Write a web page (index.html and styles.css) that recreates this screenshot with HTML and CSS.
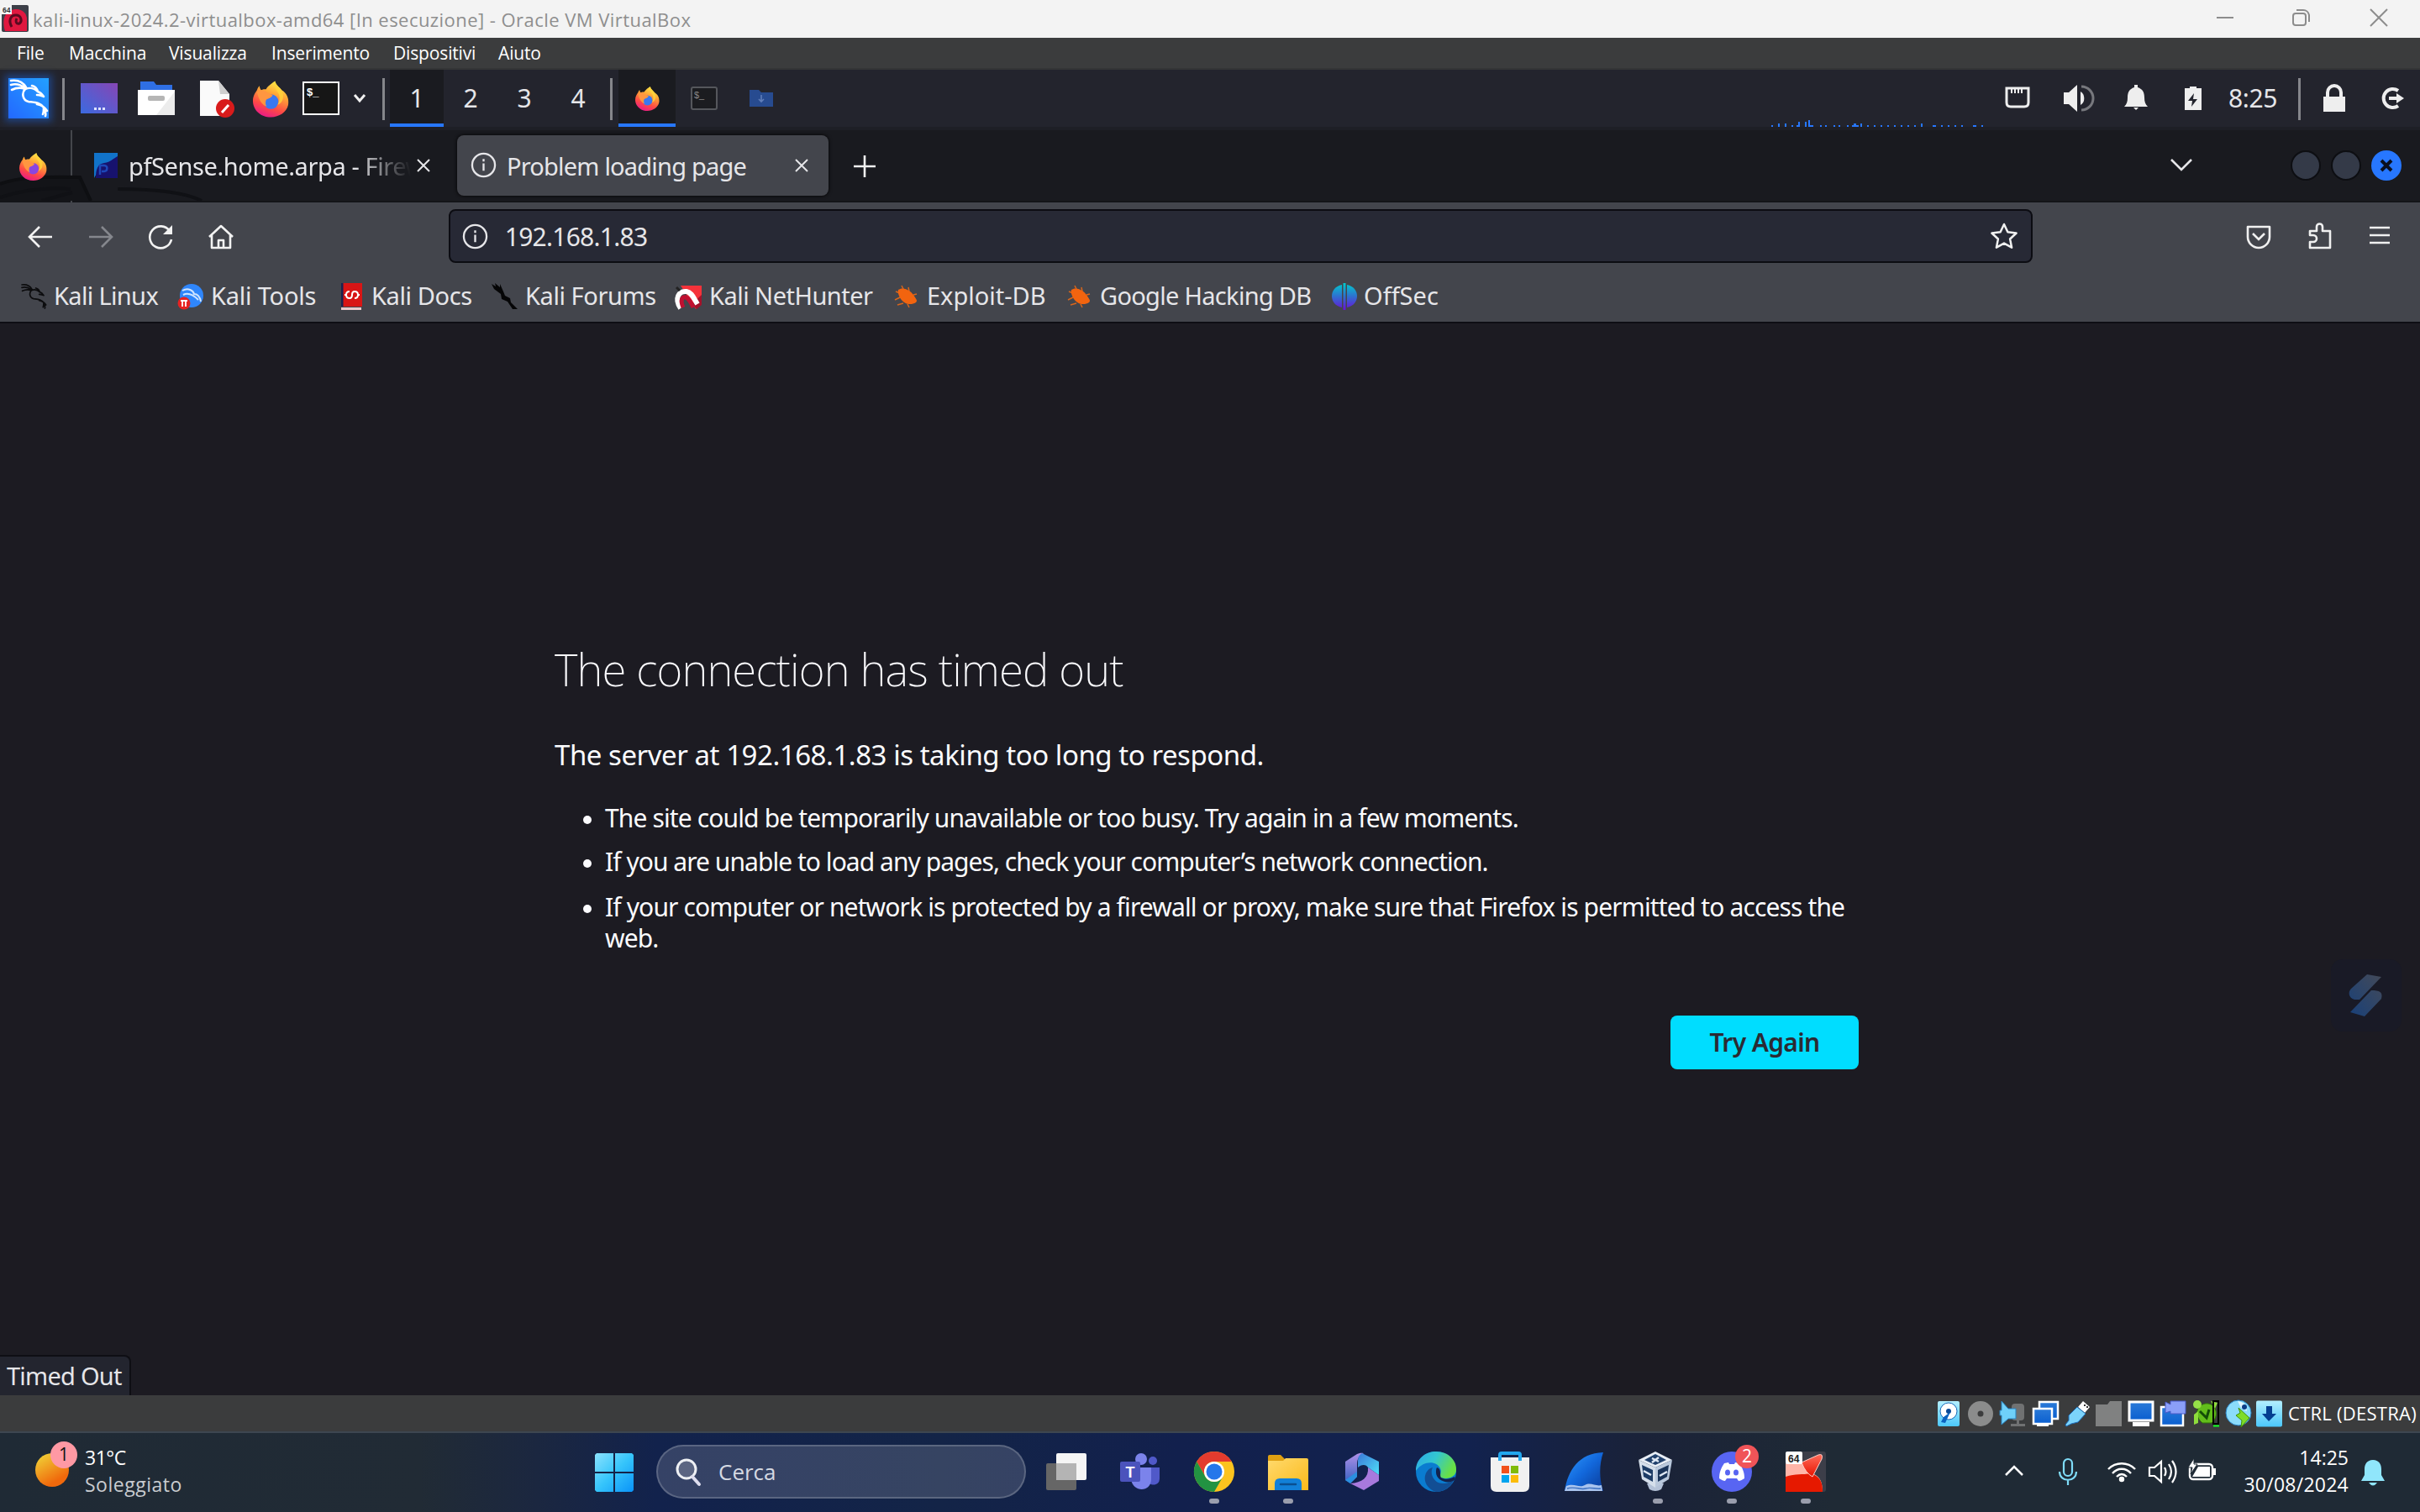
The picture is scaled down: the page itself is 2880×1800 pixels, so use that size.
FILE: index.html
```html
<!DOCTYPE html>
<html lang="it">
<head>
<meta charset="utf-8">
<title>kali-linux-2024.2-virtualbox-amd64 [In esecuzione] - Oracle VM VirtualBox</title>
<link rel="stylesheet" href="styles.css">
</head>
<body>
<svg class="defs" aria-hidden="true">
  <defs>
    <linearGradient id="gFlame" x1=".7" y1="0" x2=".3" y2="1"><stop offset="0" stop-color="#fff14a"/><stop offset=".35" stop-color="#ffa436"/><stop offset=".7" stop-color="#ff4a45"/><stop offset="1" stop-color="#e8188a"/></linearGradient>
    <linearGradient id="gKali" x1="1" y1="0" x2="0" y2="1"><stop offset="0" stop-color="#23a0ff"/><stop offset="1" stop-color="#2368ff"/></linearGradient>
    <linearGradient id="gDesk" x1="0" y1="1" x2="1" y2="0"><stop offset="0" stop-color="#3b6ae0"/><stop offset="1" stop-color="#8646b4"/></linearGradient>
    <linearGradient id="gOff" x1="0" y1="0" x2="0" y2="1"><stop offset="0" stop-color="#0cc"/><stop offset=".5" stop-color="#2f6fd0"/><stop offset="1" stop-color="#6a10d8"/></linearGradient>
    <linearGradient id="gWin" x1="0" y1="0" x2="1" y2="1"><stop offset="0" stop-color="#8be2fd"/><stop offset=".5" stop-color="#36c5fb"/><stop offset="1" stop-color="#0a93f8"/></linearGradient>
    <linearGradient id="gSky" x1="0" y1="0" x2="0" y2="1"><stop offset="0" stop-color="#b4efff"/><stop offset="1" stop-color="#4cc8fb"/></linearGradient>
    <linearGradient id="gScr" x1="0" y1="0" x2="0" y2="1"><stop offset="0" stop-color="#2a7ad8"/><stop offset="1" stop-color="#0a5fd0"/></linearGradient>
    <linearGradient id="gFold" x1="0" y1="0" x2="1" y2="1"><stop offset="0" stop-color="#ffda6d"/><stop offset="1" stop-color="#fbb91a"/></linearGradient>
    <linearGradient id="gEdge" x1="0" y1="0" x2="1" y2=".4"><stop offset="0" stop-color="#2ba8e8"/><stop offset=".5" stop-color="#33c6d0"/><stop offset="1" stop-color="#68e045"/></linearGradient>
    <linearGradient id="gShark" x1="0" y1="0" x2="1" y2="1"><stop offset="0" stop-color="#2f9bff"/><stop offset=".5" stop-color="#1268dc"/><stop offset="1" stop-color="#0a3a96"/></linearGradient>
    <linearGradient id="gS" x1="1" y1="0" x2="0" y2="1"><stop offset="0" stop-color="#444a58"/><stop offset="1" stop-color="#184079"/></linearGradient>
    <linearGradient id="gRed" x1="0" y1="0" x2="0" y2="1"><stop offset="0" stop-color="#ff6b5a"/><stop offset="1" stop-color="#e81400"/></linearGradient>
    <linearGradient id="gM1" x1="0" y1="0" x2="1" y2="1"><stop offset="0" stop-color="#3a78d8"/><stop offset="1" stop-color="#4fe0f8"/></linearGradient>
    <linearGradient id="gM2" x1="0" y1="0" x2="0" y2="1"><stop offset="0" stop-color="#b090e8"/><stop offset="1" stop-color="#3561c0"/></linearGradient>
    <symbol id="firefox" viewBox="0 0 44 44">
      <path fill="url(#gFlame)" d="M27 0c1 5 5 7 8 11 7 4 9 11 8 18-2 9-11 15-21 15C9 44 0 35 0 24c0-6 3-10 5-13 1-3 2-4 3-5 0 2 1 4 2 5 2-1 4-1 6-1 2-4 8-8 11-10z"/>
      <circle cx="22" cy="25" r="9" fill="currentColor"/>
      <path fill="#ff9640" d="M5 13c5-3 10-2 12 1l7 3c-1 4-6 4-8 6-1 3-1 6 1 8-6-2-10-8-12-18z"/>
      <path fill="#ffd43a" d="M27 0c-3 8 3 11 5 17 1 4 0 9-2 12 8-3 8-12 5-18C32 7 28 5 27 0z" opacity=".8"/>
    </symbol>
    <symbol id="dragon" viewBox="0 0 48 48">
      <path fill="none" stroke="currentColor" stroke-width="2.600" stroke-linecap="round" stroke-linejoin="round" d="M3 3c7-1 14 1 18 8M3 8c7-2 12 0 17 4M4 14c6-3 11-3 16-1M20 13c5-2 11-1 15 3 3 1 5 3 7 6-3-1-5-2-8-2M28 9c4 1 6 3 7 7M20 13c-4 4-4 13 4 15 8 1 14 1 18 7 2 4 3 7 2 10M34 31c5 1 9 3 12 8M42 35c0 4 0 6-1 8"/>
    </symbol>
    <symbol id="bug" viewBox="0 0 30 32">
      <g stroke="#d8661c" stroke-width="1.500" fill="none"><path d="M9 3l3 6M2 10l5 2M1 20l6-3M4 26l7-2M18 29l-2-4M27 13l-4 1M17 5l1 5"/></g>
      <path fill="#f2640f" d="M5 8c5-4 14 0 18 6s5 7 3 9c-6 4-14 2-18-4-2-3-4-8-3-11z"/>
    </symbol>
    <symbol id="info" viewBox="0 0 32 32"><circle cx="16" cy="16" r="14" fill="none" stroke="#e6e6e9" stroke-width="2.400"/><path stroke="#e6e6e9" stroke-width="2.400" d="M16 14v9M16 8.500v3"/></symbol>
    <symbol id="cross" viewBox="0 0 16 16"><path stroke="#e6e6e9" stroke-width="2" d="M1 1l14 14M15 1L1 15"/></symbol>
  </defs>
</svg>

<header class="titlebar">
  <svg class="vm-icon" viewBox="0 0 32 32"><rect width="32" height="32" rx="2" fill="#3d4049"/><path d="M18 5a12 12 0 0 1 12 12v14H4C-1 14 6 5 18 5z" fill="#e01840"/><path d="M12 26c-4-7-2-14 5-14 6 0 8 7 4 10-4 1-5-3-3-6" fill="none" stroke="#5a0a20" stroke-width="3"/><rect width="12" height="11" fill="#f4f4f4"/><text x="1" y="9" font-size="8.500" font-weight="700" fill="#333">64</text></svg>
  <span class="title">kali-linux-2024.2-virtualbox-amd64 [In esecuzione] - Oracle VM VirtualBox</span>
  <svg class="win-controls" viewBox="0 0 206 34" fill="none" stroke="#8c8c8c" stroke-width="2"><path d="M1 17h20"/><rect x="92" y="12" width="15" height="14" rx="3"/><path d="M96 8h8a7 7 0 0 1 7 6v8"/><path d="M184 7l20 20M204 7l-20 20"/></svg>
</header>

<nav class="menubar">
  <span class="m1">File</span><span class="m2">Macchina</span><span class="m3">Visualizza</span><span class="m4">Inserimento</span><span class="m5">Dispositivi</span><span class="m6">Aiuto</span>
</nav>

<section class="panel">
  <span class="kali-menu"><svg viewBox="0 0 48 48"><rect width="48" height="48" fill="url(#gKali)"/><use href="#dragon" color="#fff"/></svg></span>
  <i class="sep s1"></i>
  <svg class="p-desk" viewBox="0 0 44 36"><rect width="44" height="36" fill="url(#gDesk)"/><path d="M16 29h3v3h-3zM21 29h3v3h-3zM26 29h3v3h-3z" fill="#dfe4ff"/></svg>
  <svg class="p-files" viewBox="0 0 44 40"><path d="M3 0h16l3 4h19v8H3z" fill="#2f6fe4"/><path d="M0 10h44v30H0z" fill="#fff"/><path d="M44 12v28H22z" fill="#ececec"/><rect x="12" y="17" width="20" height="6" rx="2" fill="#b5b5b5"/></svg>
  <svg class="p-doc" viewBox="0 0 42 44"><path d="M0 0h22l13 16v26H0z" fill="#fafafa"/><path d="M22 0l13 16H24z" fill="#cfcfcf"/><circle cx="30" cy="33" r="11" fill="#d81b1b"/><path d="M26 38l8-9" stroke="#fff" stroke-width="3"/></svg>
  <svg class="p-fox"><use href="#firefox"/></svg>
  <svg class="p-term" viewBox="0 0 44 40"><rect x="1" y="1" width="42" height="38" fill="#161616" stroke="#fff" stroke-width="2"/><text x="5" y="17" font-size="13" font-weight="700" fill="#fff">$_</text></svg>
  <svg class="p-chev" viewBox="0 0 16 12"><path d="M2 2l6 7 6-7" fill="none" stroke="#f0f0f0" stroke-width="3"/></svg>
  <i class="sep s2"></i>
  <div class="workspaces"><b class="on">1</b><b>2</b><b>3</b><b>4</b></div>
  <i class="sep s3"></i>
  <span class="task on"><svg><use href="#firefox"/></svg></span>
  <svg class="p-dterm" viewBox="0 0 32 28"><rect x="1" y="1" width="30" height="26" rx="2" fill="#1b1c20" stroke="#55575c" stroke-width="2"/><text x="4" y="14" font-size="11" fill="#8a8a8a">$_</text></svg>
  <svg class="p-down" viewBox="0 0 28 20"><path d="M0 0h11l3 3h14v17H0z" fill="#274b90"/><path d="M14 6v8M11 11l3 3 3-3" stroke="#5f7db8" stroke-width="1.600" fill="none"/></svg>
  <svg class="cpu" viewBox="0 0 254 10" fill="#2777ff"><path d="M0 8h2v2H0zM8 6h2v4H8zM16 6h2v4h-2zM24 8h2v2h-2zM30 8h2v2h-2zM32 4h2v6h-2zM40 4h2v6h-2zM44 2h2v8h-2zM46 8h4v2h-4zM58 8h2v2h-2zM64 8h2v2h-2zM74 8h2v2h-2zM80 8h2v2h-2zM90 8h2v2h-2zM96 8h8v2h-8zM98 6h3v4h-3zM106 6h2v4h-2zM114 8h2v2h-2zM122 8h2v2h-2zM130 8h2v2h-2zM138 8h2v2h-2zM146 8h2v2h-2zM154 8h2v2h-2zM162 8h2v2h-2zM170 8h2v2h-2zM178 6h2v4h-2zM192 8h4v2h-4zM202 8h2v2h-2zM210 8h2v2h-2zM218 8h2v2h-2zM226 8h2v2h-2zM240 8h4v2h-4zM250 8h2v2h-2z"/></svg>
  <svg class="t-eth" viewBox="0 0 30 26"><path d="M2 2h26v17q0 5-5 5H7q-5 0-5-5z" fill="none" stroke="#eee" stroke-width="3"/><path d="M8 3v5M12 3v5M16 3v5M20 3v5" stroke="#eee" stroke-width="2"/></svg>
  <svg class="t-vol" viewBox="0 0 34 32"><path d="M0 9h6l10-9v32L6 23H0z" fill="#eee"/><path d="M20 8a8 9 0 0 1 0 16z" fill="#eee"/><path d="M21 2a14 14 0 0 1 0 28" fill="none" stroke="#77787d" stroke-width="3"/></svg>
  <svg class="t-bell" viewBox="0 0 28 30" fill="#eee"><path d="M12 0h4v3c6 2 8 6 8 12 0 5 1 8 4 11H0c3-3 4-6 4-11C4 9 6 5 12 3zM11 27h6l-3 3z"/></svg>
  <svg class="t-bat" viewBox="0 0 20 28"><path d="M6 0h8v2h6v26H0V2h6z" fill="#eee"/><path d="M11 8l-7 9h5l-1 7 7-9h-5z" fill="#23242d"/></svg>
  <span class="clock">8:25</span>
  <i class="sep s4"></i>
  <svg class="t-lock" viewBox="0 0 28 32"><path d="M6 15V9a8 8 0 0 1 16 0v6" fill="none" stroke="#eee" stroke-width="4"/><rect y="14" x="1" width="26" height="18" fill="#eee"/></svg>
  <svg class="t-out" viewBox="0 0 30 28" fill="none" stroke="#eee" stroke-width="4"><path d="M22 5a11 11 0 1 0 0 18M11 14h10"/><path d="M20 8l9 6-9 6z" fill="#eee" stroke="none"/></svg>
</section>

<section class="tabs">
  <svg class="wallpaper" viewBox="0 0 260 88" fill="none"><path d="M0 68c30-9 60-9 95-8l14 28H0z" fill="#131418"/><path d="M0 68c20-8 50-9 95-8l13 28" stroke="#0e0f12" stroke-width="4"/><path d="M0 84c30-10 60-12 84-10M50 88l36-10M140 74c40 0 80 4 100 14" stroke="#101115" stroke-width="4"/></svg>
  <svg class="tab-fox"><use href="#firefox"/></svg>
  <i class="divider"></i>
  <svg class="pf" viewBox="0 0 28 30"><path d="M0 0h28v8c-7 0-9 7-14 8S3 24 0 30z" fill="#1173c9"/><path d="M28 4v26H2C2 20 4 13 12 12s10-5 16-8z" fill="#17126e"/><path d="M7 26V15h5c5 0 4 7 0 7H9" stroke="#1d47b8" stroke-width="2.500" fill="none"/></svg>
  <span class="tab-title">pfSense.home.arpa - Firew</span>
  <svg class="x1"><use href="#cross"/></svg>
  <div class="tab-active"><svg class="ti"><use href="#info"/></svg><span>Problem loading page</span><svg class="x2"><use href="#cross"/></svg></div>
  <svg class="plus" viewBox="0 0 26 26"><path d="M13 0v26M0 13h26" stroke="#f0f0f0" stroke-width="2.600"/></svg>
  <svg class="tablist" viewBox="0 0 26 16"><path d="M1 2l12 12L25 2" fill="none" stroke="#e6e6e9" stroke-width="2.600"/></svg>
  <i class="dot"></i><i class="dot"></i><i class="dot blue"><svg viewBox="0 0 16 16"><path d="M2 2l12 12M14 2L2 14" stroke="#0a1020" stroke-width="4"/></svg></i>
</section>

<section class="toolbar">
  <svg class="nav" viewBox="0 0 30 30"><path d="M29 15H3M14 3L2 15l12 12" fill="none" stroke="#f2f2f2" stroke-width="2.600"/></svg>
  <svg class="nav" viewBox="0 0 30 30"><path d="M1 15h26M16 3l12 12-12 12" fill="none" stroke="#85878d" stroke-width="2.600"/></svg>
  <svg class="nav" viewBox="0 0 30 30"><path d="M26 8a13 13 0 1 0 2 10" fill="none" stroke="#f2f2f2" stroke-width="2.600"/><path d="M29 1v11H18z" fill="#f2f2f2"/></svg>
  <svg class="nav" viewBox="0 0 30 30"><path d="M1 15L15 2l14 13M4 13v15h22V13M12 28V19h6v9" fill="none" stroke="#f2f2f2" stroke-width="2.600" stroke-linejoin="round"/></svg>
  <div class="urlbar"><svg class="ui"><use href="#info"/></svg><span>192.168.1.83</span><svg class="star" viewBox="0 0 34 34"><path d="M17 3l4.400 9.300 10.200 1.200-7.500 7 2 10.200L17 25.600l-9.100 5.100 2-10.200-7.500-7 10.200-1.200z" fill="none" stroke="#f0f0f0" stroke-width="2.500" stroke-linejoin="round"/></svg></div>
  <svg class="pocket" viewBox="0 0 28 28"><path d="M1 2h26v12a13 13 0 0 1-26 0z" fill="none" stroke="#f0f0f0" stroke-width="2.600" stroke-linejoin="round"/><path d="M7 10l7 7 7-7" fill="none" stroke="#f0f0f0" stroke-width="2.600"/></svg>
  <svg class="puzzle" viewBox="0 0 28 32"><path d="M2 10h8V5a3.500 3.500 0 0 1 7 0v5h9v20H2v-7h4a4 4 0 0 0 0-8H2z" fill="none" stroke="#f0f0f0" stroke-width="2.600" stroke-linejoin="round"/></svg>
  <svg class="burger" viewBox="0 0 24 22"><path d="M0 2h24M0 11h24M0 20h24" stroke="#f0f0f0" stroke-width="2.600"/></svg>
</section>

<section class="bookmarks">
  <a class="b1"><svg viewBox="0 0 48 48" color="#0c0c0e"><use href="#dragon"/></svg><span>Kali Linux</span></a>
  <a class="b2"><svg viewBox="0 0 32 32"><circle cx="17" cy="15" r="14" fill="#2f86fb"/><path d="M6 9c7-4 13 0 14 4 5 0 7 4 8 9M7 14c6-3 12 0 18 6" fill="none" stroke="#cfe4ff" stroke-width="2"/><circle cx="8" cy="24" r="7.500" fill="#e62222"/><path d="M4 21h8M6 21v7M10 21v7" stroke="#fff" stroke-width="1.800"/></svg><span>Kali Tools</span></a>
  <a class="b3"><svg viewBox="0 0 32 32"><path d="M4 0h25v28H4z" fill="#d81515"/><path d="M4 0h2.500v28H4z" fill="#1b2350"/><path d="M4 29h24v3H4z" fill="#e9c9cb"/><path d="M14 10q-4 0-4 4t4 4q3 0 3-4t3-4q4 0 4 4t-4 4M10 14H8M26 14h-3" stroke="#fff" stroke-width="2" fill="none"/></svg><span>Kali Docs</span></a>
  <a class="b4"><svg viewBox="0 0 32 32"><path d="M0 1l5 3-1-4 6 5 0-4 4 9 2 5 6 3 1 5 8 8-6 0-6-9-7-3-1-6-8-6z" fill="#050506"/></svg><span>Kali Forums</span></a>
  <a class="b5"><svg viewBox="0 0 32 32"><path d="M6 3h25v20L24 31z" fill="#f5323a"/><path d="M31 14v12l-6 5-6-6z" fill="#a3122a"/><path d="M6 30C-2 18 4 9 13 10c6 1 8 7 13 15" fill="none" stroke="#fff" stroke-width="6"/><path d="M9 29C5 20 8 16 12 17c4 1 6 6 9 12" fill="none" stroke="#c01030" stroke-width="5"/><path d="M1 5l4 4" stroke="#222" stroke-width="3"/></svg><span>Kali NetHunter</span></a>
  <a class="b6"><svg viewBox="0 0 32 32"><use href="#bug"/></svg><span>Exploit-DB</span></a>
  <a class="b7"><svg viewBox="0 0 32 32"><use href="#bug"/></svg><span>Google Hacking DB</span></a>
  <a class="b8"><svg viewBox="0 0 32 32" fill="url(#gOff)"><path d="M13 2v27C-3 26-3 5 13 2zM19 2v27c16-3 16-24 0-27zM14.500 0h3v32h-3z"/></svg><span>OffSec</span></a>
</section>

<main>
  <div class="error">
    <h1>The connection has timed out</h1>
    <p>The server at 192.168.1.83 is taking too long to respond.</p>
    <ul>
      <li class="l1">The site could be temporarily unavailable or too busy. Try again in a few moments.</li>
      <li class="l2">If you are unable to load any pages, check your computer’s network connection.</li>
      <li class="l3">If your computer or network is protected by a firewall or proxy, make sure that Firefox is permitted to access the<br>web.</li>
    </ul>
    <button>Try Again</button>
  </div>
  <svg class="side" viewBox="0 0 84 86"><rect width="84" height="86" rx="14" fill="#191a26"/><path d="M43 18l17 3-26 27h-6c-7-2-8-9-4-13zM48 37c10 0 14 2 12 10L40 68l-17-5z" fill="url(#gS)"/></svg>
  <div class="status-tip">Timed Out</div>
</main>

<section class="vmbar">
  <svg viewBox="0 0 32 32"><rect x="3" y="1" width="26" height="30" rx="2" fill="url(#gSky)"/><circle cx="16" cy="13" r="10" fill="#fff" stroke="#1c6cb8"/><circle cx="16" cy="13" r="3" fill="#0a4a98"/><path d="M18 14l-6 13-5-1 3-6z" fill="#0a63c0"/></svg>
  <svg viewBox="0 0 32 32"><circle cx="16" cy="16" r="15" fill="#8b8c8c"/><circle cx="16" cy="16" r="3.500" fill="#3b3c3d"/></svg>
  <svg viewBox="0 0 32 32"><rect x="15" y="4" width="15" height="20" rx="4" fill="#707172"/><path d="M21 23h3v5h-3zM14 28h17v3H14z" fill="#707172"/><path d="M1 12h2L3 1l8 9h9v12h-9l-8 7V18H1z" fill="#6fd0fa" stroke="#2b83c0"/></svg>
  <svg viewBox="0 0 32 32"><rect x="9" y="2" width="22" height="20" fill="url(#gScr)" stroke="#fff" stroke-width="2.500"/><rect x="2" y="10" width="22" height="18" fill="url(#gScr)" stroke="#fff" stroke-width="2.500"/><path d="M6 28h14v3H6z" fill="#fff"/></svg>
  <svg viewBox="0 0 32 32"><path d="M23 1l8 7-6 7-8-7z" fill="#fff"/><path d="M24 5h2v2h-2zM27 7h2v2h-2z" fill="#333"/><path d="M16 8l10 8-9 10-8 2-6 3-1-2 4-5v-6z" fill="#7cd4fb" stroke="#1c6cb8"/></svg>
  <svg viewBox="0 0 32 32"><path d="M0 5h14l3-4h14v30H0z" fill="#808181"/></svg>
  <svg viewBox="0 0 32 32"><rect x="2" y="2" width="28" height="22" fill="url(#gScr)" stroke="#fff" stroke-width="3"/><path d="M6 26h20v5H6z" fill="#fff"/></svg>
  <svg viewBox="0 0 32 32"><rect x="2" y="8" width="26" height="22" fill="url(#gScr)" stroke="#fff" stroke-width="2.500"/><path d="M13 1h18v15H13v-3l-6 2V2l6 3z" fill="#8b9ff8" stroke="#4a5ac8"/></svg>
  <svg viewBox="0 0 32 32"><path d="M8 8c6-6 14-5 18 0 4 6 3 14-3 19H12C5 21 4 14 8 8z" fill="#62bd1b" stroke="#2f7208"/><circle cx="6" cy="5" r="5" fill="#96e048"/><path d="M2 17l5-4v14l-5 2zM22 1l8 2-3 7z" fill="#8fdc3c"/><path d="M9 13l8 8 3-10" fill="none" stroke="#134d07" stroke-width="3"/><rect x="25" y="1" width="6" height="27" fill="none" stroke="#000" stroke-width="2"/><path d="M25 30.500h7" stroke="#1f2" stroke-width="2"/></svg>
  <svg viewBox="0 0 32 32"><ellipse cx="17" cy="15" rx="15" ry="15" fill="#8bdcfb" stroke="#2a83c4"/><path d="M16 1c8 1 10 5 11 12l-7-4z" fill="#dff6ff"/><circle cx="24" cy="8" r="3" fill="#0b3d88"/><path d="M17 9l13 12-10 11 1-8-7-6 5-3z" fill="#7fdc28" stroke="#3e9208"/></svg>
  <svg viewBox="0 0 32 32"><rect width="31" height="31" y=".5" rx="2" fill="url(#gSky)"/><path d="M12 7h7v9h5l-9 9-8-9h5z" fill="#053f92"/></svg>
  <span>CTRL (DESTRA)</span>
</section>

<footer class="taskbar">
  <div class="sun"><i></i><b>1</b></div>
  <div class="weather"><span>31°C</span><em>Soleggiato</em></div>
  <svg class="win" viewBox="0 0 46 46" fill="url(#gWin)"><path d="M2 0h20v22H0V2zM24 0h20l2 2v20H24zM0 24h22v22H2l-2-2zM24 24h22v20l-2 2H24z"/></svg>
  <div class="search"><svg viewBox="0 0 30 32"><circle cx="13" cy="12" r="11" fill="#ffffff30" stroke="#eef0f4" stroke-width="3"/><path d="M20 21l8 9" stroke="#dde" stroke-width="4" stroke-linecap="round"/></svg><span>Cerca</span></div>
  <svg class="tv" viewBox="0 0 48 46"><rect x="12" y="0" width="36" height="32" rx="2" fill="#f5f5f5"/><rect x="0" y="12" width="36" height="32" rx="2" fill="#666"/><path d="M12 12h24v20H12z" fill="#b4b4b4"/></svg>
  <svg class="tm" viewBox="0 0 48 44"><circle cx="25" cy="7" r="7" fill="#7b83eb"/><circle cx="39" cy="9" r="5" fill="#5059c9"/><path d="M34 17h13v13c0 8-8 9-12 6z" fill="#5059c9"/><path d="M13 17h24v14c0 16-22 16-24 0z" fill="#7b83eb"/><rect y="10" width="24" height="24" rx="2" fill="#4b53bc"/><text x="6.500" y="28.500" font-size="18" font-weight="700" fill="#fff">T</text></svg>
  <div class="app run"><svg viewBox="0 0 48 48"><circle cx="24" cy="24" r="24" fill="#fcc31e"/><path d="M3.200 12A24 24 0 0 1 44.800 12H24a12 12 0 0 0-10.400 18z" fill="#e33b2e"/><path d="M3.200 12A24 24 0 0 0 24 48l10.400-18a12 12 0 0 1-20.800 0z" fill="#229342"/><circle cx="24" cy="24" r="12" fill="#fff"/><circle cx="24" cy="24" r="9.500" fill="#2577ea"/></svg></div>
  <div class="app run"><svg viewBox="0 0 48 48"><path d="M0 6q0-2 2-2h13l5 5v6H0z" fill="#dfa011"/><path d="M0 11h18l3-3h25q2 0 2 2v36H0z" fill="url(#gFold)"/><path d="M8 46V38q0-6 6-6h20q6 0 6 6v8z" fill="#1280d8"/><path d="M15 39h18" stroke="#0a4f90" stroke-width="2.500" stroke-linecap="round"/></svg></div>
  <div class="app"><svg viewBox="0 0 48 48"><path d="M4 12L18 3c4-2 8-1 8-1-7 4-8 8-8 14v14l-8 8-6-4z" fill="url(#gM2)"/><path d="M24 2l20 10v16L31 19c-2-4-8-4-12 0 0-9-1-14 5-17z" fill="url(#gM1)"/><path d="M31 19l13 9v7L26 46 10 38c14-1 22-7 21-19z" fill="#a879dd"/><path d="M4 34l14-10v6l-8 8z" fill="#2a8fe0"/></svg></div>
  <div class="app"><svg viewBox="0 0 48 48"><circle cx="24" cy="24" r="24" fill="#0a7cd0"/><path d="M0 23C0 8 12 0 24 0c16 0 25 12 24 22 0 8-10 12-18 9-4-1 2-5-1-11C25 11 9 10 0 23z" fill="url(#gEdge)"/><path d="M20 19c-4 8 2 19 12 19 6 0 10-2 13-4-4 10-14 14-21 14C6 42 8 22 20 19z" fill="#124e94"/><path d="M25 19c6 1 3 10 5 12 5 3 10 2 16-1 1 2 1 3 0 4-8 6-22 0-22-9 0-3 0-4 1-6z" fill="#13234e"/></svg></div>
  <div class="app"><svg viewBox="0 0 48 48"><path d="M1 7h46v34q0 7-7 7H8q-7 0-7-7z" fill="#f1f1f1"/><path d="M12 11V4q0-2 2-2h20q2 0 2 2v7" fill="none" stroke="#22a7ee" stroke-width="4"/><path d="M14 17h9v9h-9z" fill="#f1511b"/><path d="M25 17h9v9h-9z" fill="#80bb0a"/><path d="M14 28h9v9h-9z" fill="#00a4ee"/><path d="M25 28h9v9h-9z" fill="#fbbc09"/></svg></div>
  <div class="app"><svg viewBox="0 0 48 48"><path d="M1 47C5 22 18 2 47 1c-5 14-5 32 0 46z" fill="url(#gShark)"/><path d="M3 41c10-4 15 3 22-1s13 2 20 0l1 7H1z" fill="#a9c4ee"/><path d="M4 44c9-3 16 2 22 0s12 1 18 0" stroke="#3b6fc0" stroke-width="1.500" fill="none"/></svg></div>
  <div class="app run vb"><svg viewBox="0 0 48 48"><path d="M14 38h20l-3 7q-7 4-14 0z" fill="#b4c2d8"/><path d="M24 0l20 10-20 9L4 10z" fill="#e8eef6"/><path d="M24 3l13 7-13 6-13-6z" fill="#20406c"/><path d="M4 10l20 9v24L8 33z" fill="#d5dfeb"/><path d="M44 10l-20 9v24l16-10z" fill="#b9c8dc"/><path d="M8 16l13 6v14L10 30z" fill="#1d3c66"/><path d="M40 16l-13 6v14l11-6z" fill="#1a3459"/><path d="M10 23l9 5M29 29l9-5M20 8l8 4M28 7l-8 6" stroke="#dfe8f4" stroke-width="2.500"/></svg></div>
  <div class="app run"><svg viewBox="0 0 48 48"><circle cx="24" cy="24" r="24" fill="#5865f2"/><path d="M15 14l5-1 1 2h6l1-2 5 1c4 6 6 11 6 18-3 2-5 3-7 3l-2-3h-12l-2 3c-2 0-4-1-7-3 0-7 2-12 6-18z" fill="#fff"/><ellipse cx="19" cy="25" rx="3" ry="3.500" fill="#5865f2"/><ellipse cx="29" cy="25" rx="3" ry="3.500" fill="#5865f2"/></svg><b class="badge">2</b></div>
  <div class="app run"><svg viewBox="0 0 48 48"><rect width="48" height="48" rx="3" fill="#3c3e49"/><path d="M0 14h20l12 12c10 4 12 12 12 22H0z" fill="#ffb5a8"/><path d="M0 30c12-4 20-2 30-4 12 4 14 12 14 22H0z" fill="#e61900"/><path d="M19 13l20-9q6-2 4 5l-11 21q-8-4-13-17z" fill="url(#gRed)" stroke="#ffd0c8"/><rect width="20" height="15" rx="2" fill="#fff"/><text x="3" y="12.500" font-size="12" font-weight="700" fill="#222">64</text></svg></div>
  <svg class="r-chev" viewBox="0 0 22 14"><path d="M1 12L11 2l10 10" fill="none" stroke="#fff" stroke-width="2.500"/></svg>
  <svg class="r-mic" viewBox="0 0 22 32" fill="none" stroke="#7fdcf8" stroke-width="2.200"><rect x="6" y="1" width="10" height="20" rx="5"/><path d="M1 16c0 13 20 13 20 0M11 26v6"/></svg>
  <svg class="r-wifi" viewBox="0 0 34 24" fill="none" stroke="#fff" stroke-width="2.400"><path d="M1 9c9-9 23-9 32 0M6 14c6-7 16-7 22 0M11 18c4-4 8-4 12 0"/><circle cx="17" cy="21" r="2" fill="#fff"/></svg>
  <svg class="r-vol" viewBox="0 0 34 28" fill="none" stroke="#fff" stroke-width="2.200"><path d="M1 9h6l8-7v24l-8-7H1zM19 9q3 5 0 10M24 5q6 9 0 18M28 1q9 13 0 26"/></svg>
  <svg class="r-bat" viewBox="0 0 34 28"><rect x="2" y="7" width="27" height="18" rx="4" fill="none" stroke="#fff" stroke-width="2.400"/><path d="M12 10h14v12H5z" fill="#fff"/><path d="M30 12h3v8h-3z" fill="#fff"/><path d="M7 0L0 11h5L3 19l8-12H7z" fill="#fff" stroke="#1f2a35" stroke-width="1"/></svg>
  <div class="date"><span class="h">14:25</span><span class="d">30/08/2024</span></div>
  <svg class="r-bell" viewBox="0 0 28 32" fill="#90e6fb"><path d="M14 0c7 0 10 5 10 11v7l4 7H0l4-7v-7C4 5 7 0 14 0zM9 27h10q-5 7-10 0z"/></svg>
</footer>
</body>
</html>
```
FILE: styles.css
```css
* { box-sizing: border-box; }
html, body { margin: 0; width: 2880px; height: 1800px; overflow: hidden; }
body { display: flex; flex-direction: column; background: #1c1b22; color: #e6e6e9; font-family: "Noto Sans", sans-serif; }
svg { display: block; flex: none; overflow: visible; }
svg text { font-family: "Liberation Sans", sans-serif; }
i, em, b { font-style: normal; font-weight: 400; }
.defs { position: absolute; width: 0; height: 0; }
section, header, nav, footer { display: flex; flex: none; align-items: flex-start; white-space: nowrap; }

.titlebar { height: 45px; background: #f3f3f3; padding: 6px 0 0 2px; }
.vm-icon { width: 32px; height: 32px; }
.title { margin-left: 5px; width: 2598px; font: 22px/34px "Open Sans", sans-serif; letter-spacing: .45px; color: #8e8e8e; }
.win-controls { width: 206px; height: 34px; margin-top: -2px; }

.menubar { height: 38px; background: #3b3c3d; border-bottom: 2px solid #343536; font: 21px/36px "Open Sans", sans-serif; letter-spacing: -.15px; color: #fff; padding-left: 20px; }
.m1 { width: 62px; } .m2 { width: 119px; } .m3 { width: 122px; } .m4 { width: 145px; } .m5 { width: 125px; }

.panel { height: 72px; background: #23242d; border-bottom: 4px solid #1e1f26; padding-left: 10px; color: #3a78f0; }
.panel > * { margin-top: 10px; }
.kali-menu { width: 48px; height: 48px; box-shadow: 0 0 8px 4px #1d5fd080; }
.sep { width: 3px; height: 50px; background: #85868b; flex: none; }
.s1 { margin-left: 16px; }
.p-desk { width: 44px; height: 36px; margin: 16px 0 0 19px; }
.p-files { width: 44px; height: 40px; margin: 14px 0 0 24px; }
.p-doc { width: 42px; height: 44px; margin: 13px 0 0 30px; }
.p-fox { width: 43px; height: 44px; margin: 13px 0 0 21px; }
.p-term { width: 44px; height: 40px; margin: 14px 0 0 16px; }
.p-chev { width: 16px; height: 12px; margin: 28px 0 0 16px; }
.s2 { margin-left: 19px; }
.workspaces { display: flex; margin: 0 0 0 6px; color: #e6e6e9; }
.workspaces b { width: 64px; height: 68px; text-align: center; font-size: 30px; line-height: 67px; }
.on { background: #1a1b20; border-bottom: 4px solid #2777ff; }
.s3 { margin-left: 6px; }
.task { margin: 0 0 0 7px; width: 68px; height: 68px; padding: 20px 0 0 20px; }
.task svg { width: 29px; height: 29px; }
.p-dterm { width: 32px; height: 28px; margin: 20px 0 0 18px; }
.p-down { width: 28px; height: 20px; margin: 24px 0 0 38px; }
.cpu { width: 254px; height: 10px; margin: 58px 0 0 1188px; }
.t-eth { width: 30px; height: 26px; margin: 20px 0 0 24px; }
.t-vol { width: 34px; height: 32px; margin: 18px 0 0 40px; }
.t-bell { width: 28px; height: 30px; margin: 18px 0 0 38px; }
.t-bat { width: 20px; height: 28px; margin: 20px 0 0 44px; }
.clock { margin: 0 0 0 32px; width: 83px; font-size: 30px; line-height: 67px; letter-spacing: -.4px; color: #e6e6e9; }
.t-lock { width: 28px; height: 32px; margin: 18px 0 0 26px; }
.t-out { width: 30px; height: 28px; margin: 20px 0 0 40px; }

.tabs { position: relative; height: 86px; background: #191a1f; border-bottom: 2px solid #131418; }
.wallpaper { position: absolute; left: 0; bottom: 0; width: 260px; height: 88px; clip-path: inset(0); }
.tab-fox { width: 33px; height: 33px; margin: 27px 0 0 23px; position: relative; color: #8a45e0; }
.divider { width: 2px; height: 86px; background: #44464b; margin-left: 28px; }
.pf { width: 28px; height: 30px; margin: 27px 0 0 26px; }
.tab-title { margin: 23px 0 0 13px; width: 336px; overflow: hidden; font-size: 29px; line-height: 40px; letter-spacing: -.4px; -webkit-mask: linear-gradient(90deg, #000 80%, transparent); mask: linear-gradient(90deg, #000 80%, transparent); }
.x1, .x2 { width: 16px; height: 16px; }
.x1 { margin: 34px 0 0 7px; }
.tab-active { display: flex; margin: 6px 0 0 32px; width: 442px; height: 72px; border-radius: 8px; background: #43454c; box-shadow: 0 0 4px #000; padding-left: 16px; font-size: 29px; line-height: 73px; letter-spacing: -.8px; }
.ti { width: 31px; height: 31px; margin-top: 20px; }
.tab-active span { margin: 0 0 0 12px; width: 343px; }
.x2 { margin-top: 28px; }
.plus { width: 26px; height: 26px; margin: 30px 0 0 30px; }
.tablist { width: 26px; height: 16px; margin: 33px 0 0 1541px; }
.dot { width: 36px; height: 36px; border-radius: 50%; background: #343a48; border: 2px solid #0d0e12; margin: 24px 12px 0 0; flex: none; }
.tablist + .dot { margin-left: 117px; }
.blue { background: #2777ff; border: 0; padding: 10px; }
.blue svg { width: 16px; height: 16px; }

.toolbar { height: 80px; background: #43454c; padding-left: 33px; }
.nav { width: 30px; height: 30px; margin: 26px 41.700px 0 0; }
.urlbar { display: flex; width: 1885px; height: 64px; margin: 8px 0 0 214px; background: #272935; border: 2px solid #0c0c12; border-radius: 8px; padding-left: 14px; font-size: 30px; line-height: 61px; letter-spacing: -.75px; }
.ui { width: 31px; height: 31px; margin-top: 15px; }
.urlbar span { margin-left: 20px; width: 1767px; }
.star { width: 34px; height: 34px; margin-top: 13px; }
.pocket { width: 28px; height: 28px; margin: 27px 0 0 255px; }
.puzzle { width: 28px; height: 32px; margin: 24px 0 0 45px; }
.burger { width: 24px; height: 22px; margin: 28px 0 0 45px; }

.bookmarks { height: 64px; background: #43454c; border-bottom: 2px solid #0e0e14; font-size: 29px; line-height: 62px; padding-left: 24px; }
.bookmarks a { display: flex; flex: none; }
.bookmarks svg { width: 32px; height: 32px; margin: 16px 8px 0 0; }
.b1 { width: 187px; letter-spacing: -.65px; }
.b2 { width: 191px; letter-spacing: -.2px; }
.b3 { width: 183px; letter-spacing: -.4px; }
.b4 { width: 219px; letter-spacing: -.42px; }
.b5 { width: 259px; letter-spacing: -.52px; }
.b6 { width: 206px; }
.b7 { width: 315px; letter-spacing: -.7px; }
.b8 svg { margin-right: 7px; }

main { position: relative; flex: 1; min-height: 0; color: #fbfbfe; }
.error { margin-left: 660px; width: 1552px; padding-top: 360px; display: flex; flex-direction: column; white-space: nowrap; }
h1 { margin: 0; font-size: 53px; line-height: 104px; font-weight: 200; letter-spacing: -.88px; }
p { margin: 0; font-size: 33px; line-height: 96px; padding-top: 2px; letter-spacing: -.46px; }
ul { margin: 0; padding: 8px 0 0 60px; font-size: 30px; line-height: 37px; }
li { letter-spacing: -.87px; }
li::marker { font-size: 27px; }
.l1 { margin-bottom: 15px; }
.l2 { margin-bottom: 17px; letter-spacing: -.96px; }
button { align-self: flex-end; margin-top: 74px; width: 224px; height: 64px; border: 0; border-radius: 8px; background: #0df; color: #2b2a33; font: 600 30px/60px "Noto Sans", sans-serif; letter-spacing: -.65px; padding: 0; }
.side { position: absolute; left: 2774px; top: 757px; width: 84px; height: 86px; }
.status-tip { position: absolute; left: 0; bottom: 0; width: 156px; height: 48px; padding-left: 8px; background: #23252f; border: 2px solid #0e0e14; border-width: 2px 2px 0 0; border-radius: 0 8px 0 0; color: #e6e6e9; font-size: 29px; line-height: 45px; letter-spacing: -.75px; white-space: nowrap; }

.vmbar { height: 45px; background: #3b3c3d; border-bottom: 2px solid #3d4650; padding-left: 2303px; gap: 6.200px; font: 22px/43px "Open Sans", sans-serif; letter-spacing: .25px; color: #fff; }
.vmbar svg { width: 32px; height: 32px; margin-top: 6px; }

.taskbar { height: 94px; background: linear-gradient(90deg, #1f2a35 0, #212b35 500px, #1b2740 640px, #12224c 780px, #132447 1120px, #12204d 1400px, #12224e 1750px, #1a2238 1960px, #1f2a35 2180px, #1f2a35 100%); font-family: "Open Sans", sans-serif; color: #fff; }
.sun { position: relative; width: 50px; height: 54px; margin: 10px 0 0 42px; }
.sun i { position: absolute; left: 0; top: 14px; width: 40px; height: 40px; border-radius: 50%; background: linear-gradient(150deg, #f0c531 15%, #f0690c 75%); }
.sun b { position: absolute; left: 18px; top: 0; width: 32px; height: 32px; border-radius: 50%; background: #ff99a4; color: #111; text-align: center; font-size: 21px; line-height: 31px; }
.weather { display: flex; flex-direction: column; width: 600px; margin: 13px 0 0 9px; font-size: 23px; line-height: 32px; }
.weather span { letter-spacing: -.5px; }
.weather em { color: #c9ccd0; letter-spacing: .5px; }
.win { width: 46px; height: 46px; margin: 24px 0 0 7px; }
.search { display: flex; margin: 14px 0 0 27px; width: 440px; height: 64px; border-radius: 32px; border: 2px solid #ffffff30; background: #ffffff26; padding-left: 21px; font-size: 26px; line-height: 61px; color: #d5d9e2; }
.search svg { width: 30px; height: 32px; margin: 15px 21px 0 0; }
.tv { width: 48px; height: 46px; margin: 24px 0 0 24px; }
.tm { width: 48px; height: 44px; margin: 24px 0 0 40px; }
.app { position: relative; width: 48px; height: 72px; margin: 22px 0 0 40px; flex: none; }
.app svg { width: 48px; height: 48px; }
.vb svg { margin-left: -3px; }
.run::after { content: ""; position: absolute; left: 18px; top: 56px; width: 12px; height: 6px; border-radius: 3px; background: #9a9ead; }
.badge { position: absolute; left: 28px; top: -8px; width: 28px; height: 28px; border-radius: 50%; background: #f05458; text-align: center; font-size: 21px; line-height: 27px; }
.r-chev { width: 22px; height: 14px; margin: 38px 0 0 213px; }
.r-mic { width: 22px; height: 32px; margin: 30px 0 0 42px; }
.r-wifi { width: 34px; height: 24px; margin: 34px 0 0 36px; }
.r-vol { width: 34px; height: 28px; margin: 32px 0 0 15px; }
.r-bat { width: 34px; height: 28px; margin: 30px 0 0 13px; }
.date { display: flex; flex-direction: column; align-items: flex-end; width: 157px; margin: 13px 0 0 0; font-size: 23px; line-height: 32px; }
.date .d { letter-spacing: .25px; }
.r-bell { width: 28px; height: 32px; margin: 32px 0 0 15px; }
```
